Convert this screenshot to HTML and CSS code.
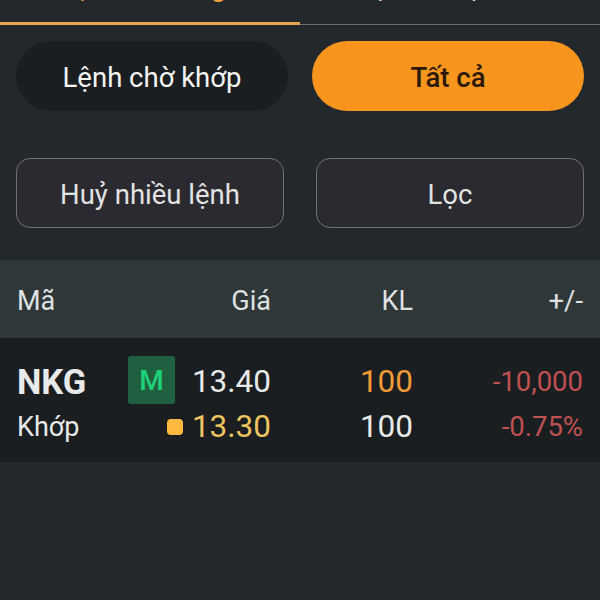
FILE: index.html
```html
<!DOCTYPE html>
<html lang="en">
<head>
    <meta charset="UTF-8">
    <title>Sổ lệnh</title>
    <link rel="stylesheet" href="styles.css">
</head>
<body>

    <!-- Tabs, cut off by the top of the screen -->
    <div class="tabs">
        <div class="tab tab-active"><span>Lệnh thường</span></div>
        <div class="tab"><span>Lịch sử lệnh</span></div>
    </div>

    <div class="btn-row pills">
        <div class="pill">Lệnh chờ khớp</div>
        <div class="pill pill-active">Tất cả</div>
    </div>

    <div class="btn-row actions">
        <div class="action">Huỷ nhiều lệnh</div>
        <div class="action">Lọc</div>
    </div>

    <div class="row table-head">
        <div class="col-code">Mã</div>
        <div class="col-price">Giá</div>
        <div class="col-vol">KL</div>
        <div class="col-change">+/-</div>
    </div>

    <div class="order">
        <div class="row order-line">
            <div class="col-code code">NKG</div>
            <div class="col-price">
                <span class="badge">M</span>
                <span>13.40</span>
            </div>
            <div class="col-vol orange">100</div>
            <div class="col-change red">-10,000</div>
        </div>
        <div class="row order-line">
            <div class="col-code status">Khớp</div>
            <div class="col-price yellow">
                <span class="dot"></span>
                <span>13.30</span>
            </div>
            <div class="col-vol">100</div>
            <div class="col-change red">-0.75%</div>
        </div>
    </div>

</body>
</html>
```
FILE: styles.css
```css
* {
    box-sizing: border-box;
}

html, body {
    height: 100%;
}

body {
    margin: 0;
    overflow: hidden;
    background-color: #22282c;
    color: #e8eaea;
    font-family: Roboto, "Liberation Sans", sans-serif;
}

.tabs {
    display: flex;
    height: 25px;
    border-bottom: 1px solid #6b6e70;
}

.tab {
    width: 300px;
    height: 25px;
    overflow: hidden;
    display: flex;
    justify-content: center;
    align-items: flex-start;
    font-size: 28px;
    line-height: 30px;
    color: #f0f0f0;
}

.tab span {
    white-space: nowrap;
    margin-top: -28px;
    margin-left: -26px;
}

.tab-active {
    color: #f4a340;
    border-bottom: 3px solid #e8a552;
}

.tab-active span {
    margin-left: -14px;
    word-spacing: 10px;
}

.btn-row {
    display: flex;
    gap: 24px;
    padding: 0 16px;
}

.pills {
    margin-top: 16px;
}

.pill {
    flex: 1;
    height: 70px;
    padding-top: 2px;
    border-radius: 35px;
    background-color: #1a1e21;
    color: #f4f4f4;
    display: flex;
    justify-content: center;
    align-items: center;
    font-size: 27.5px;
}

.pill-active {
    background-color: #f8951d;
    color: #2b1a0c;
    font-weight: 500;
}

.actions {
    margin-top: 47px;
    gap: 32px;
}

.action {
    flex: 1;
    height: 70px;
    padding-top: 2px;
    border: 1px solid #6f7275;
    border-radius: 14px;
    background-color: #2c2a31;
    color: #e2e3e3;
    display: flex;
    justify-content: center;
    align-items: center;
    font-size: 27.5px;
}

.row {
    display: flex;
    align-items: center;
    padding: 0 17px;
    font-size: 27px;
}

.table-head {
    margin-top: 32px;
    height: 78px;
    padding-top: 3px;
    background-color: #2f3738;
    color: #dfe2e2;
}

.col-code {
    width: 100px;
}

.col-price {
    width: 154px;
    display: flex;
    justify-content: flex-end;
    align-items: center;
}

.col-vol {
    width: 142px;
    text-align: right;
}

.col-change {
    flex: 1;
    text-align: right;
    font-size: 27.5px;
}

.order {
    height: 124px;
    padding-top: 21px;
    background-color: #1a1e21;
}

.order-line {
    height: 45px;
    font-size: 31.5px;
}

.code {
    font-size: 34.5px;
    font-weight: 700;
}

.status {
    font-size: 27px;
}

.badge {
    width: 47px;
    height: 48px;
    margin-top: -3px;
    margin-right: 17px;
    border-radius: 3px;
    background-color: #1f6040;
    color: #1fd176;
    display: flex;
    justify-content: center;
    align-items: center;
    font-size: 28px;
    font-weight: 500;
}

.dot {
    width: 16px;
    height: 16px;
    margin-right: 9px;
    border-radius: 4px;
    background-color: #fdb93f;
}

.orange {
    color: #f19a36;
}

.yellow {
    color: #f0c560;
}

.red {
    color: #bf5150;
}
```
